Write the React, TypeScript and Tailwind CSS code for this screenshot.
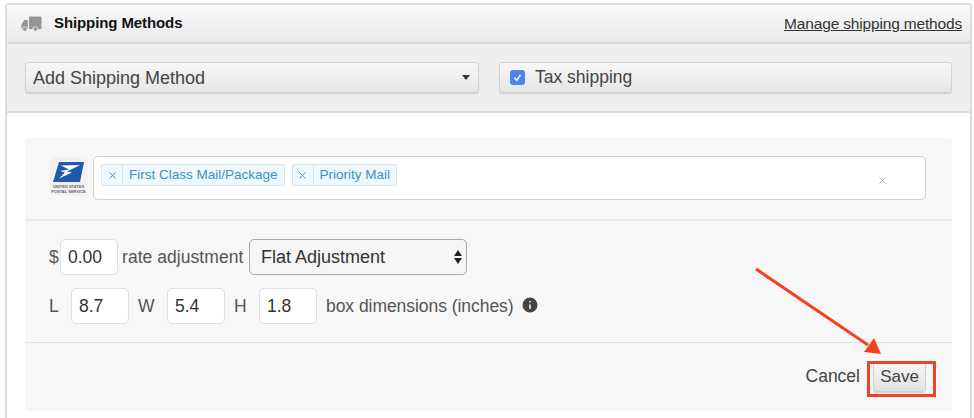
import { Info, X } from "lucide-react";

const sans = { fontFamily: '"Liberation Sans", Arial, sans-serif' };

function Truck() {
  return (
    <svg width="21" height="16" viewBox="0 0 21 16" className="shrink-0" aria-hidden="true">
      <path fill="#959595" d="M8 0.5h11.5a1 1 0 0 1 1 1V13h-4a3 3 0 0 0-5.5 0H8zM6.8 4v9h-0.6a3 3 0 0 0-5.4-0.2H0.4V8.6L3.2 4z" />
      <circle cx="3.8" cy="13" r="2.3" fill="#959595" stroke="#eeeeee" strokeWidth="0.8" />
      <circle cx="14.5" cy="13" r="2.3" fill="#959595" stroke="#eeeeee" strokeWidth="0.8" />
    </svg>
  );
}

function UspsLogo() {
  return (
    <div className="mt-[1px] flex h-[38px] w-[37px] shrink-0 flex-col items-center bg-[#f1f1f1] pt-[5px]">
      <svg width="31" height="20" viewBox="0 0 31 20" aria-hidden="true">
        <path fill="#1f5ba8" d="M6 0h25l-4 20H0z" />
        <path fill="#ffffff" d="M8 3.5l19-0.5-13 6.5 5 1-13 6 6-6-5-1.5 9-1.5z" />
      </svg>
      <div className="mt-[2px] text-center text-[4px] leading-[5px] font-bold whitespace-nowrap text-[#666]">
        UNITED STATES
        <br />
        POSTAL SERVICE
      </div>
    </div>
  );
}

function Tag({ label }: { label: string }) {
  return (
    <span className="flex h-[22px] items-center rounded-[2px] border border-[#cfe6f3] bg-[#f0f8fd] text-[13.5px] text-[#3a92c8]">
      <span className="flex h-full w-[21px] items-center justify-center border-r border-[#cfe6f3]">
        <X className="h-[11px] w-[11px]" strokeWidth={2} />
      </span>
      <span className="px-[6px] pt-[1px]">{label}</span>
    </span>
  );
}

function NumInput({ value, width }: { value: string; width: string }) {
  return (
    <span className={`flex h-[36px] items-center rounded-[5px] border border-[#dfdfdf] bg-white pl-[7px] text-[17.5px] text-[#333] ${width}`}>
      {value}
    </span>
  );
}

export default function App() {
  return (
    <div className="relative h-[418px] w-[974px] overflow-hidden bg-white" style={sans}>
      <div className="mt-[3px] ml-[5px] h-[440px] w-[967px] rounded-t-[4px] border-2 border-b-0 border-[#dcdcdc]">
        <div className="flex h-[39px] items-center justify-between border-b-2 border-[#dcdcdc] bg-gradient-to-b from-[#fafafa] to-[#e9e9e9] pr-[8px] pl-[14px]">
          <div className="flex items-center gap-[12px]">
            <Truck />
            <span className="text-[15px] font-bold tracking-[-0.1px] text-[#111]">Shipping Methods</span>
          </div>
          <a className="text-[15.5px] tracking-[-0.17px] text-[#333] underline">Manage shipping methods</a>
        </div>

        <div className="flex h-[69px] items-center gap-[20px] border-b-2 border-[#dcdcdc] bg-[#eeeeee] pr-[18px] pl-[18px]">
          <div className="flex h-[31px] w-[454px] items-center justify-between rounded-[3px] border border-[#d2d2d2] bg-gradient-to-b from-[#f7f7f7] to-[#e6e6e6] pr-[8px] pl-[7px] text-[18px] text-[#444] shadow-[0_1px_1px_rgba(0,0,0,0.12)]">
            <span className="pt-[1px]">Add Shipping Method</span>
            <span className="h-0 w-0 border-x-[4.5px] border-t-[5px] border-x-transparent border-t-[#333]" />
          </div>
          <div className="flex h-[31px] flex-1 items-center gap-[10px] rounded-[3px] border border-[#d2d2d2] bg-gradient-to-b from-[#f7f7f7] to-[#e6e6e6] pl-[10px] text-[17.5px] text-[#444] shadow-[0_1px_1px_rgba(0,0,0,0.12)]">
            <span className="flex h-[15px] w-[15px] items-center justify-center rounded-[3px] bg-[#4a86f0]">
              <svg width="11" height="11" viewBox="0 0 11 11" aria-hidden="true">
                <path d="M2.5 5.8l2.2 2.4 3.8-5.2" fill="none" stroke="#fff" strokeWidth="1.5" />
              </svg>
            </span>
            Tax shipping
          </div>
        </div>

        <div className="px-[18px] pt-[25px]">
          <div className="h-[273px] rounded-[4px] bg-[#f7f7f7]">
            <div className="flex h-[83px] items-start gap-[6px] border-b-2 border-[#e8e8e8] pt-[18px] pl-[25px]">
              <UspsLogo />
              <div className="flex h-[44px] w-[833px] items-start gap-[7px] rounded-[5px] border border-[#d0d0d0] bg-white pt-[7px] pl-[7px]">
                <Tag label="First Class Mail/Package" />
                <Tag label="Priority Mail" />
                <span className="mt-[11px] ml-auto mr-[37px] text-[#999]">
                  <X className="h-[11px] w-[11px]" strokeWidth={1.6} />
                </span>
              </div>
            </div>

            <div className="flex h-[122px] flex-col gap-[13px] border-b border-[#e2e2e2] pt-[18px] pl-[24px] text-[17.5px] text-[#555]">
              <div className="flex items-center">
                <span className="w-[11px]">$</span>
                <NumInput value="0.00" width="w-[58px]" />
                <span className="ml-[4px] w-[127px] tracking-[0.05px] whitespace-nowrap">rate adjustment</span>
                <div className="flex h-[36px] w-[218px] items-center justify-between rounded-[5px] border border-[#a9a9a9] bg-[#f5f5f5] pr-[4px] pl-[11px] text-[#333]">
                  <span className="text-[18px]">Flat Adjustment</span>
                  <span className="flex flex-col gap-[2px]">
                    <span className="h-0 w-0 border-x-[4.5px] border-b-[6px] border-x-transparent border-b-[#222]" />
                    <span className="h-0 w-0 border-x-[4.5px] border-t-[6px] border-x-transparent border-t-[#222]" />
                  </span>
                </div>
              </div>
              <div className="flex items-center">
                <span className="w-[22px]">L</span>
                <NumInput value="8.7" width="w-[58px]" />
                <span className="ml-[9px] w-[29px]">W</span>
                <NumInput value="5.4" width="w-[58px]" />
                <span className="ml-[9px] w-[25px]">H</span>
                <NumInput value="1.8" width="w-[58px]" />
                <span className="ml-[9px] tracking-[-0.05px] whitespace-nowrap">box dimensions (inches)</span>
                <Info className="ml-[6px] -mt-[3px] h-[20px] w-[20px] fill-[#444] text-[#f7f7f7]" strokeWidth={2} />
              </div>
            </div>

            <div className="flex items-center justify-end pt-[18px] pr-[26px] text-[#444]">
              <span className="mr-[13px] text-[17.5px]">Cancel</span>
              <span className="flex h-[31px] w-[53px] items-center justify-center rounded-[3px] border border-[#d2d2d2] bg-gradient-to-b from-[#f7f7f7] to-[#e2e2e2] text-[17px] shadow-[0_1px_1px_rgba(0,0,0,0.15)]">
                Save
              </span>
            </div>
          </div>
        </div>
      </div>

      <div className="absolute top-[361px] left-[867px] h-[36px] w-[69px] border-[3px] border-[#ee4423]" />
      <svg className="absolute top-0 left-0" width="974" height="418" viewBox="0 0 974 418" aria-hidden="true">
        <path d="M756 269L868 345" stroke="#ee4423" strokeWidth="3" fill="none" />
        <path d="M881 354L864 352L874 338z" fill="#ee4423" />
      </svg>
    </div>
  );
}
